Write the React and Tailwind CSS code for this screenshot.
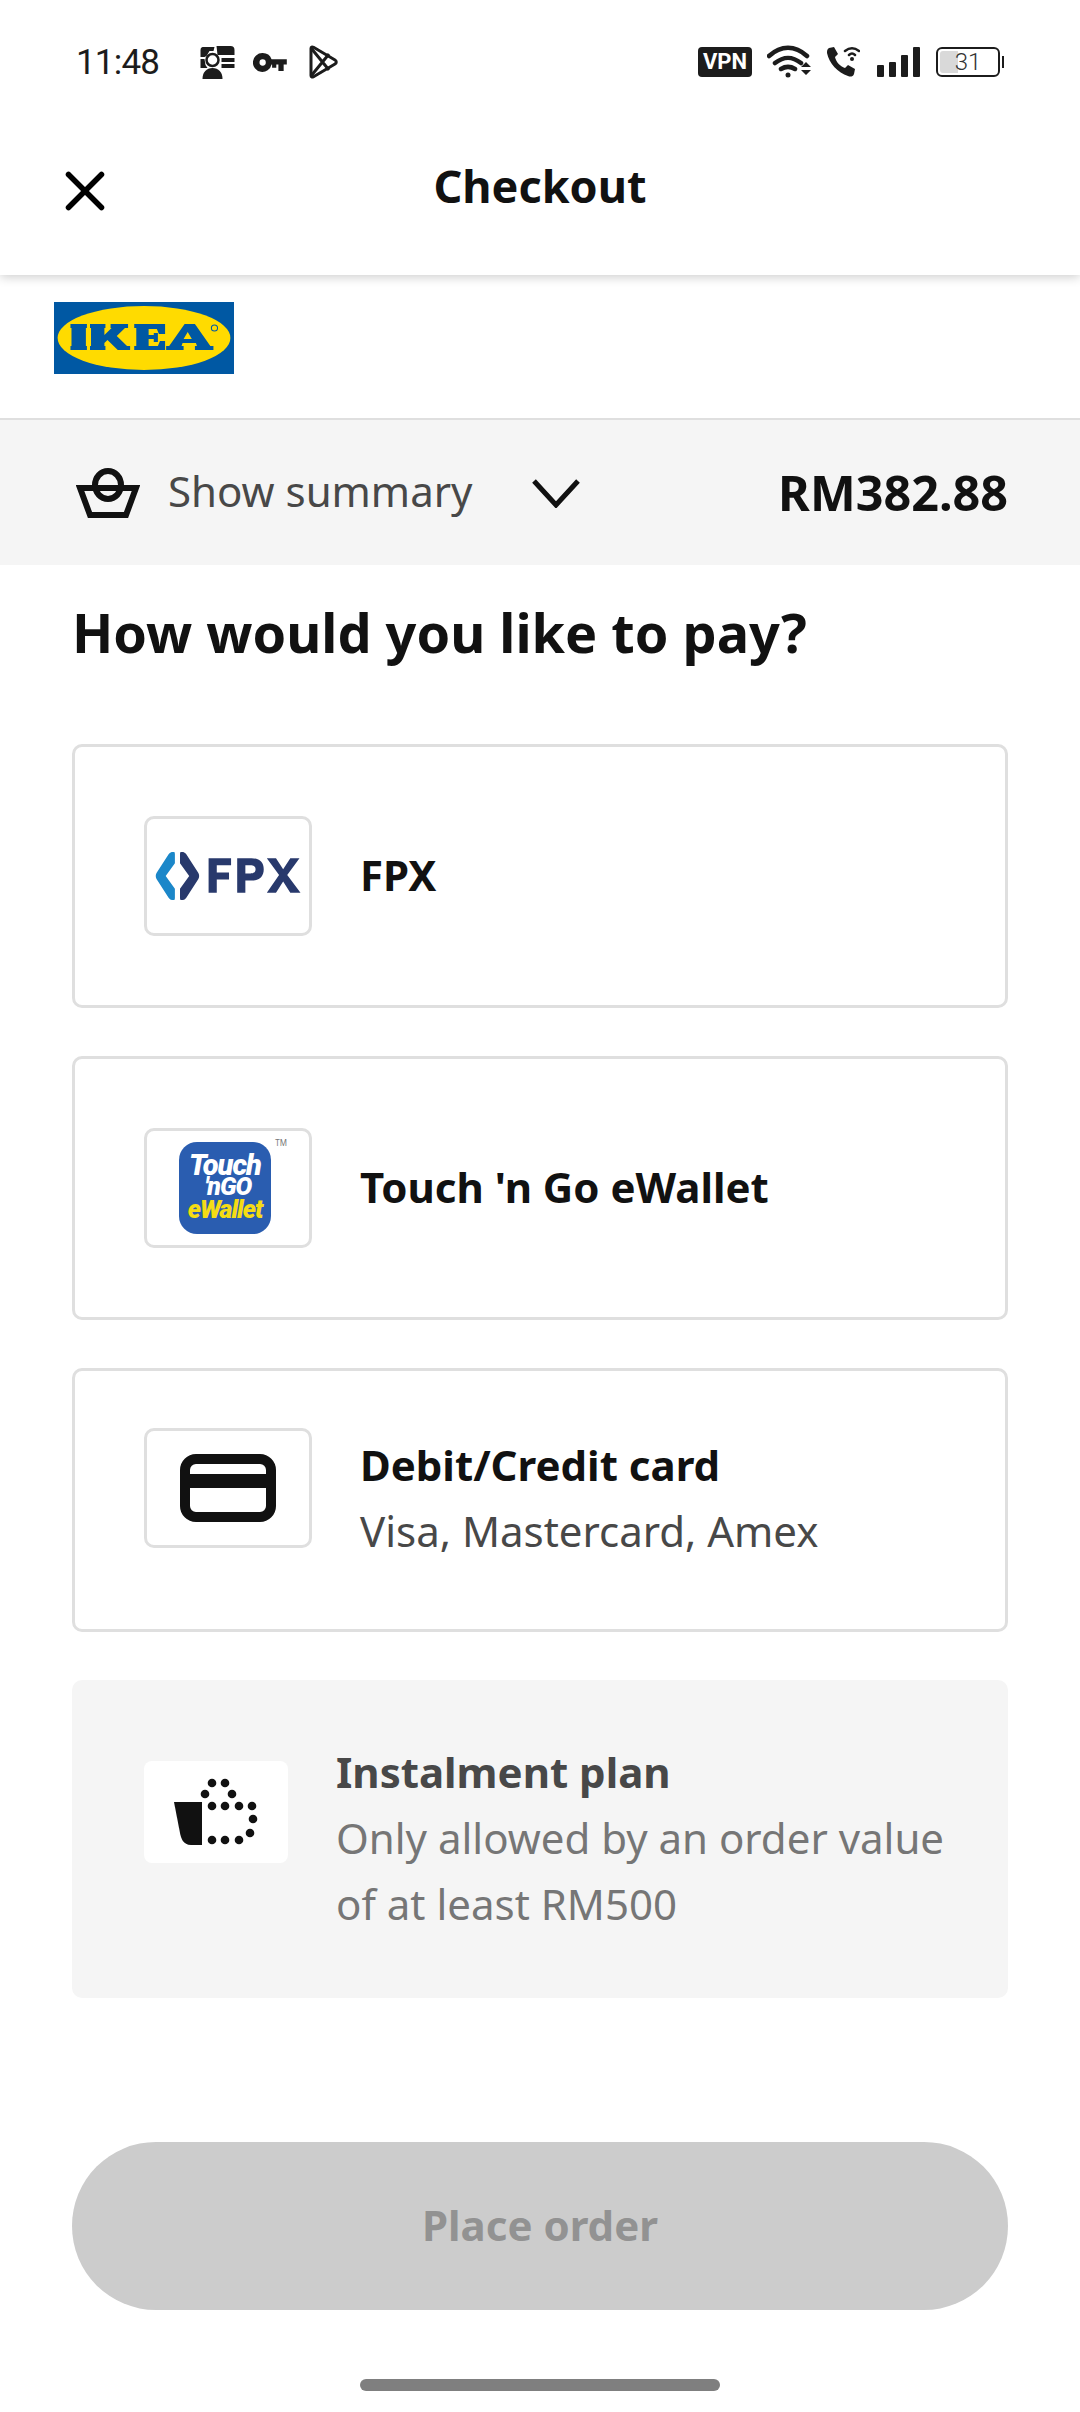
import { X } from 'lucide-react';

const FONT = "font-['Noto_Sans','Open_Sans',sans-serif]";

function StatusBar() {
  return (
    <div className="h-[122px] flex items-center justify-between pl-[76px] pr-[76px] pt-[2px]">
      <div className="flex items-center">
        <span className="text-[35px] leading-none text-[#1c1c1c] font-['Roboto',sans-serif] tracking-[-0.8px]">11:48</span>
        <svg className="ml-[40px]" width="37" height="36" viewBox="0 0 36 36" fill="#1c1c1c">
          <path d="M3 3h12l-1 4h-4l-3 5-2 1H1V6a3 3 0 0 1 2-3zM17 2h14a4 4 0 0 1 4 4v5H18zM1 15h4l1 6 2 3H1zM22 14h13v4H22zM22 20h13v4H22z" />
          <circle cx="13" cy="16" r="6" fill="none" stroke="#1c1c1c" strokeWidth="2.5" />
          <path d="M3 35c0-7 4-11 10-11s10 4 10 11z" />
        </svg>
        <svg className="ml-[17px]" width="34" height="21" viewBox="0 0 32 20" fill="#1c1c1c">
          <path d="M9 1a9 9 0 0 1 8.5 6H32v5h-3v6h-5v-6h-2v3h-4v-3h-.5A9 9 0 1 1 9 1zm0 6a3 3 0 1 0 0 6 3 3 0 0 0 0-6z" />
        </svg>
        <svg className="ml-[20px]" width="32" height="34" viewBox="0 0 30 34" fill="none" stroke="#1c1c1c" strokeWidth="3" strokeLinejoin="round">
          <path d="M3 3.5c0-1.5 1-2 2.5-1.2L27 15c1.7 1 1.7 3 0 4L5.500 31.700C4 32.500 3 32 3 30.500z" />
          <path d="M3 3l18 22M3 31L21 9" />
        </svg>
      </div>
      <div className="flex items-center">
        <div className="w-[54px] h-[30px] rounded-[4px] bg-[#1c1c1c] text-white text-[22px] leading-[30px] font-bold text-center font-['Roboto',sans-serif]">VPN</div>
        <svg className="ml-[15px]" width="46" height="34" viewBox="0 0 46 34" fill="none" stroke="#1c1c1c" strokeWidth="4.500" strokeLinecap="round">
          <path d="M2 11C14 0 28 0 40 11M8 18c9-7 17-7 26 0M14 24c5-3 9-3 14 0" />
          <circle cx="21" cy="30" r="2.500" fill="#1c1c1c" stroke="none" />
          <path d="M39 17l5 5H34zM34 25h10l-5 5z" fill="#1c1c1c" stroke="none" />
        </svg>
        <svg className="ml-[13px]" width="34" height="32" viewBox="0 0 34 32" fill="#1c1c1c">
          <path d="M3 2l5-1 4 7-3 3c1 5 5 9 10 11l3-3 7 4-1 5c-1 3-4 3-6 2C12 27 3 17 1 7c0-2 0-4 2-5z" />
          <path d="M19 5c5-4 9-4 14 0M23 9c2-2 4-2 6 0" fill="none" stroke="#1c1c1c" strokeWidth="2.500" strokeLinecap="round" />
          <circle cx="26" cy="13" r="2" />
        </svg>
        <div className="ml-[17px] flex items-end gap-[5px] h-[30px]">
          <div className="w-[7px] h-[12px] bg-[#1c1c1c] rounded-[1px]" />
          <div className="w-[7px] h-[15px] bg-[#1c1c1c] rounded-[1px]" />
          <div className="w-[7px] h-[22px] bg-[#1c1c1c] rounded-[1px]" />
          <div className="w-[7px] h-[30px] bg-[#1c1c1c] rounded-[1px]" />
        </div>
        <div className="ml-[16px] w-[64px] h-[30px] border-[2px] border-[#1c1c1c] rounded-[6px] p-[2px] relative flex items-stretch">
          <div className="w-[18px] bg-[#d9d9d9] rounded-l-[3px]" />
          <span className="absolute inset-0 text-center text-[24px] leading-[26px] font-light text-[#333] font-['Roboto',sans-serif]">31</span>
        </div>
        <div className="ml-[2px] w-[2px] h-[12px] bg-[#1c1c1c]" />
      </div>
    </div>
  );
}

function IkeaLogo() {
  return (
    <svg width="180" height="72" viewBox="0 0 175 72" preserveAspectRatio="none" className="block">
      <rect width="175" height="72" fill="#0058a3" />
      <ellipse cx="87.500" cy="36" rx="84" ry="32" fill="#ffdb00" />
      <path
        fill="#0058a3"
        d="M16 22h16v4h-1v18h1v4H16v-4h1V26h-1zM35 22h15v4h-1v7l7-7h-1v-4h17v4h-3l-8 8 10 10h3v4H62l-10-10-3 3v3h1v4H35v-4h1V26h-1zM78 22h30v10h-6l-2-5h-8v6h5v-2h4v9h-4v-3h-5v7h9l2-5h5v9H78v-4h2V26h-2zM127 22h10l15 22h3v4h-18v-4h2l-1-3h-13l-1 3h2v4h-17v-4h3zM130 30l-4 7h8z"
      />
      <circle cx="156" cy="26" r="3" fill="none" stroke="#0058a3" strokeWidth="1" />
    </svg>
  );
}

function LogoBox({ children }) {
  return (
    <div className="relative w-[168px] h-[120px] shrink-0 bg-white border-[3px] border-[#dfdfdf] rounded-[10px] flex items-center justify-center">
      {children}
    </div>
  );
}

function FpxLogo() {
  return (
    <svg width="146" height="48" viewBox="0 0 142 47">
      <path d="M16 0c2-1 3 0 3 2v9l-9 12.500 9 12.500v9c0 2-1 3-3 2-1 0-2-1-3-2L1 26.500c-1-2-1-4 0-6L13 2c1-1 2-2 3-2z" fill="#1b87c9" />
      <path d="M27 0c-2-1-3 0-3 2v9l9 12.500-9 12.500v9c0 2 1 3 3 2 1 0 2-1 3-2l12-18.500c1-2 1-4 0-6L30 2c-1-1-2-2-3-2z" fill="#28396c" />
      <path
        fillRule="evenodd"
        fill="#28396c"
        d="M52 6h22v7H60v7h12v7H60v13h-8zM80 6h14c8 0 12 4 12 11s-4 11-12 11h-6v12h-8zM88 13v8h5c3 0 5-1 5-4s-2-4-5-4zM109 6h9l7 11 7-11h9l-12 16.500L142 40h-10l-7-11-7 11h-9l12-17.500z"
      />
    </svg>
  );
}

function TngLogo() {
  return (
    <>
      <div className="w-[92px] h-[92px] -ml-[6px] rounded-[18px] bg-[#2a5db0] flex flex-col items-center justify-center italic font-black font-['Roboto',sans-serif]">
        <span className="text-white text-[29px] tracking-[-1px] leading-[24px]">Touch</span>
        <span className="text-white text-[25px] tracking-[-1px] leading-[20px] pl-[6px]">&apos;nGO</span>
        <span className="text-[#f5dc14] text-[25px] tracking-[-1px] leading-[26px]">eWallet</span>
      </div>
      <span className="absolute right-[22px] top-[8px] text-[8px] leading-none text-[#777]">TM</span>
    </>
  );
}

function CardIcon() {
  return (
    <svg width="96" height="68" viewBox="0 0 96 68">
      <path
        fillRule="evenodd"
        fill="#111"
        d="M16 0h64a16 16 0 0 1 16 16v36a16 16 0 0 1-16 16H16A16 16 0 0 1 0 52V16A16 16 0 0 1 16 0zm0 10a6 6 0 0 0-6 6v4h76v-4a6 6 0 0 0-6-6zm-6 24v18a6 6 0 0 0 6 6h64a6 6 0 0 0 6-6V34z"
      />
    </svg>
  );
}

function InstalmentIcon() {
  const dots = [
    [38, 5], [51, 5], [31, 16], [58, 16], [38, 28], [51, 28], [65, 28], [78, 28],
    [79, 41], [76, 55], [38, 62], [51, 62], [65, 62],
  ];
  return (
    <svg width="84" height="68" viewBox="0 0 84 68">
      <path d="M0 24h28v43H17C9 67 7 60 6 55z" fill="#111" />
      {dots.map(([cx, cy]) => (
        <circle key={`${cx}-${cy}`} cx={cx} cy={cy} r="4.300" fill="#111" />
      ))}
    </svg>
  );
}

function PayOption({ logo, title }) {
  return (
    <div className="h-[264px] border-[3px] border-[#dfdfdf] rounded-[10px] flex items-center pl-[69px]">
      <LogoBox>{logo}</LogoBox>
      <div className="ml-[48px] pb-[3px] text-[42px] leading-[66px] font-bold text-[#111]">{title}</div>
    </div>
  );
}

export default function App() {
  return (
    <div className={`w-[1080px] h-[2412px] bg-white overflow-hidden flex flex-col ${FONT}`}>
      <div className="h-[275px] bg-white shadow-[0_2px_10px_rgba(0,0,0,0.2)] relative z-10 shrink-0">
        <StatusBar />
        <div className="relative flex items-center justify-center h-[126px] -mt-[1px]">
          <X className="absolute left-[52px] top-[37px] text-black" size={66} strokeWidth={2} />
          <h1 className="text-[45px] leading-none font-bold text-[#111] mt-[2px]">Checkout</h1>
        </div>
      </div>

      <div className="h-[145px] pl-[54px] pt-[27px] border-b-[2px] border-[#dfdfdf] shrink-0">
        <IkeaLogo />
      </div>

      <div className="h-[145px] bg-[#f5f5f5] flex items-center justify-between pl-[76px] pr-[72px] shrink-0">
        <div className="flex items-center">
          <svg width="64" height="50" viewBox="0 0 64 50" fill="none" stroke="#111" strokeWidth="6">
            <path d="M4 20h56l-10 27H14z" />
            <ellipse cx="32" cy="17" rx="13" ry="14" />
          </svg>
          <span className="ml-[28px] pb-[4px] text-[42px] leading-none text-[#484848]">Show summary</span>
          <svg className="ml-[60px]" width="48" height="30" viewBox="0 0 48 30" fill="none" stroke="#111" strokeWidth="5">
            <path d="M2 3l22 24L46 3" />
          </svg>
        </div>
        <span className="text-[48.500px] leading-none font-bold text-[#111]">RM382.88</span>
      </div>

      <div className="px-[72px] flex flex-col">
        <h2 className="text-[54px] leading-[74px] font-bold text-[#111] mt-[30px]">How would you like to pay?</h2>
        <div className="mt-[75px] flex flex-col gap-[48px]">
          <PayOption logo={<FpxLogo />} title="FPX" />
          <PayOption logo={<TngLogo />} title="Touch 'n Go eWallet" />
          <div className="h-[264px] border-[3px] border-[#dfdfdf] rounded-[10px] flex items-start pl-[69px] pt-[57px]">
            <LogoBox><CardIcon /></LogoBox>
            <div className="ml-[48px] mt-[4px]">
              <div className="text-[42px] leading-[66px] font-bold text-[#111]">Debit/Credit card</div>
              <div className="text-[42px] leading-[66px] text-[#484848]">Visa, Mastercard, Amex</div>
            </div>
          </div>
          <div className="h-[318px] bg-[#f5f5f5] rounded-[10px] flex items-start pl-[72px] pt-[59px]">
            <div className="w-[144px] h-[102px] mt-[22px] bg-white rounded-[8px] flex items-center justify-center shrink-0">
              <InstalmentIcon />
            </div>
            <div className="ml-[48px]">
              <div className="text-[42px] leading-[66px] font-bold text-[#484848]">Instalment plan</div>
              <div className="text-[42px] leading-[66px] text-[#767676]">Only allowed by an order value<br />of at least RM500</div>
            </div>
          </div>
        </div>
        <div className="mt-[144px] h-[168px] pb-[3px] rounded-full bg-[#cccccc] flex items-center justify-center text-[42px] font-bold text-[#929292]">
          Place order
        </div>
      </div>

      <div className="mt-[69px] mx-auto w-[360px] h-[12px] rounded-full bg-[#7f7f7f] shrink-0" />
    </div>
  );
}
